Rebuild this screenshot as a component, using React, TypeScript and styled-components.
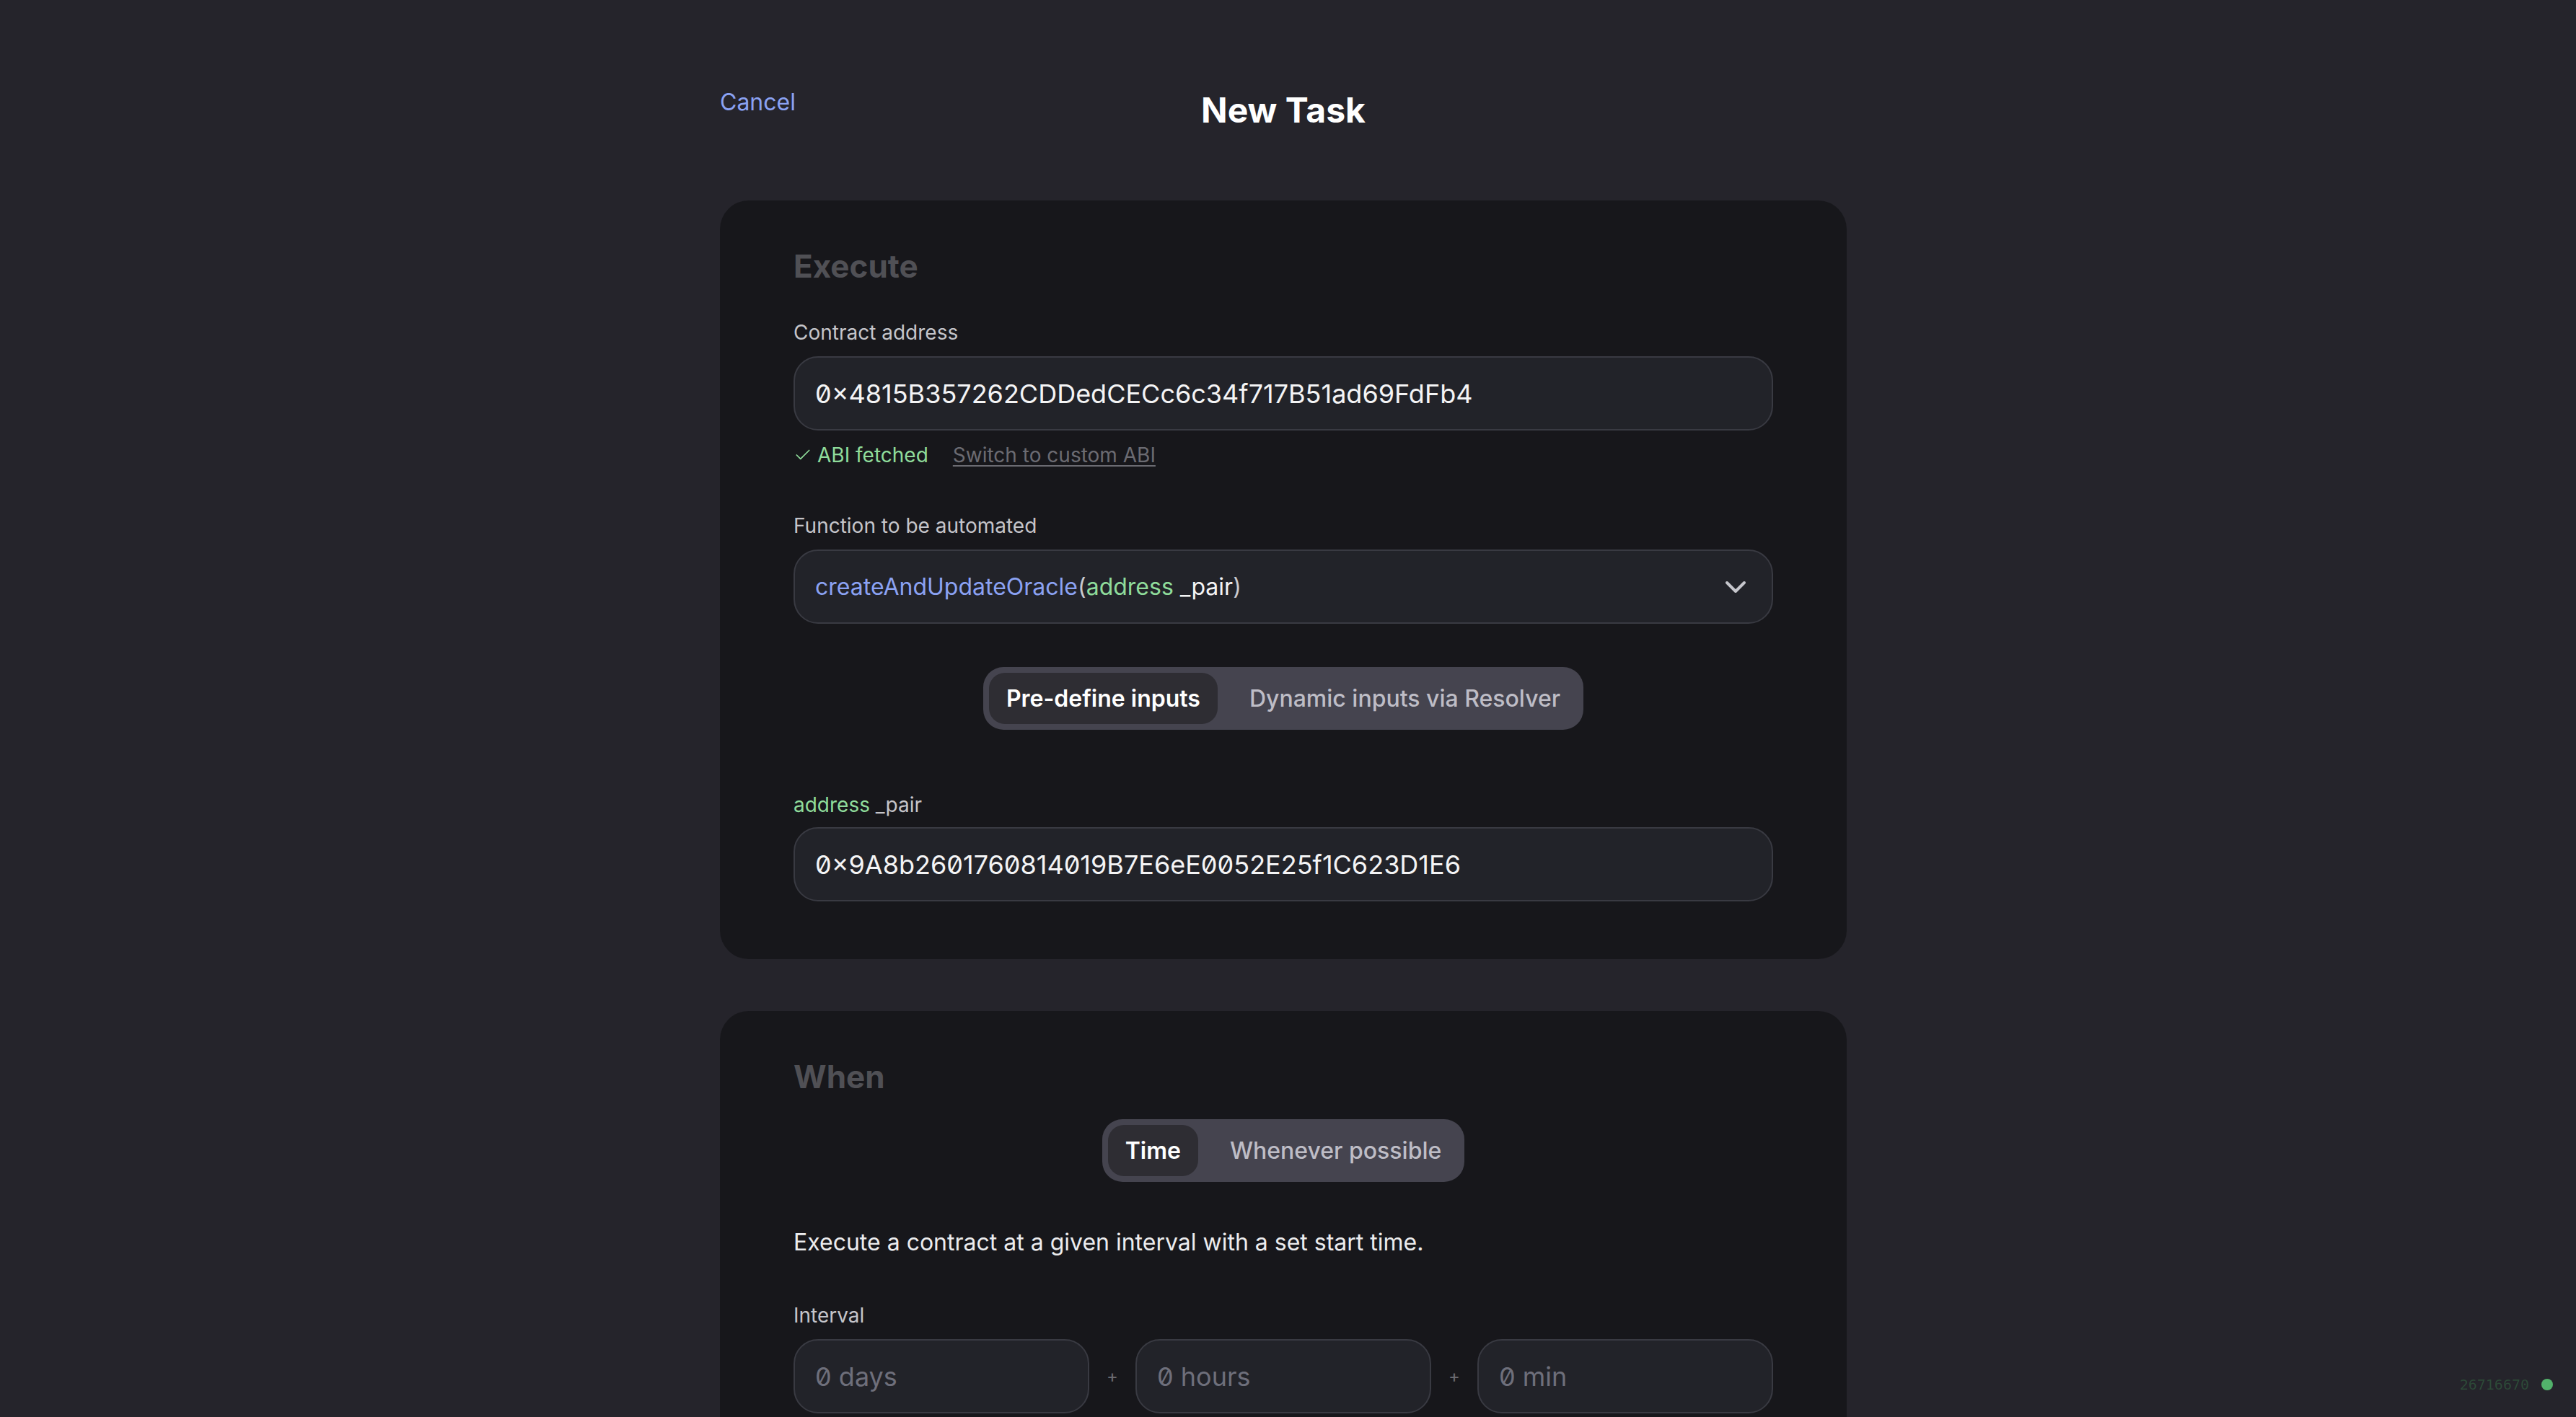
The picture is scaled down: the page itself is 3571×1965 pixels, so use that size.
import React from 'react';
import styled, { createGlobalStyle } from 'styled-components';
import { Check, ChevronDown } from 'lucide-react';

const C = {
  page: '#25242b',
  card: '#17171b',
  field: '#222329',
  fieldBorder: '#393a42',
  heading: '#505055',
  label: '#c5c5ca',
  text: '#f4f4f5',
  blue: '#8ba2f3',
  green: '#8fdc9b',
  muted: '#6b6b72',
  placeholder: '#6e6f7b',
  track: '#45444f',
  tabActive: '#2e2d33',
  tabText: '#bebdc6',
};

const GlobalStyle = createGlobalStyle`
  html, body {
    margin: 0;
    background: ${C.page};
    font-family: Inter, 'Noto Sans', 'Liberation Sans', sans-serif;
    color: ${C.text};
  }
  * { box-sizing: border-box; }
`;

const Page = styled.main`
  padding: 124px 13px 0 0;
`;

const Container = styled.div`
  width: 1562px;
  margin: 0 auto;
`;

const Header = styled.header`
  display: grid;
  grid-template-columns: 1fr auto 1fr;
  align-items: start;
  margin-bottom: 96px;
`;

const CancelLink = styled.a`
  justify-self: start;
  font-size: 32px;
  line-height: 36px;
  color: ${C.blue};
  cursor: pointer;
`;

const Title = styled.h1`
  margin: 0;
  font-size: 48px;
  line-height: 58px;
  font-weight: 700;
  color: #fff;
`;

const Card = styled.section<{ $mt?: number }>`
  background: ${C.card};
  border-radius: 40px;
  padding: 65px 102px 80px;
  margin-top: ${p => p.$mt ?? 0}px;
  display: flex;
  flex-direction: column;
`;

const SectionTitle = styled.h2`
  margin: 0;
  font-size: 44px;
  line-height: 52px;
  font-weight: 700;
  color: ${C.heading};
`;

const Field = styled.div<{ $mt: number; $gap?: number }>`
  display: flex;
  flex-direction: column;
  gap: ${p => p.$gap ?? 17}px;
  margin-top: ${p => p.$mt}px;
`;

const Label = styled.label`
  font-size: 28px;
  line-height: 32px;
  color: ${C.label};
`;

const TypeWord = styled.span`
  color: ${C.green};
`;

const TextInput = styled.input`
  width: 100%;
  height: 103px;
  padding: 0 28px;
  background: ${C.field};
  border: 2px solid ${C.fieldBorder};
  border-radius: 34px;
  font-family: inherit;
  font-size: 36px;
  font-feature-settings: 'zero' 1;
  color: ${C.text};
  outline: none;

  &::placeholder {
    color: ${C.placeholder};
  }
`;

const StatusRow = styled.div<{ $mt: number }>`
  display: flex;
  align-items: center;
  margin-top: ${p => p.$mt}px;
  font-size: 28px;
  line-height: 32px;
`;

const Fetched = styled.span`
  display: inline-flex;
  align-items: center;
  gap: 7px;
  color: ${C.green};
`;

const SwitchLink = styled.a`
  margin-left: 34px;
  color: ${C.muted};
  text-decoration: underline;
  text-underline-offset: 4px;
  cursor: pointer;
`;

const SelectBox = styled.div`
  height: 103px;
  padding: 0 28px;
  display: flex;
  align-items: center;
  justify-content: space-between;
  background: ${C.field};
  border: 2px solid ${C.fieldBorder};
  border-radius: 34px;
  font-size: 32px;
  color: ${C.text};
  cursor: pointer;

  svg {
    color: #c6c6cc;
    margin-right: -2px;
  }
`;

const FnName = styled.span`
  color: ${C.blue};
`;

const Paren = styled.span`
  color: #c9c9ce;
`;

const ToggleRow = styled.div<{ $mt: number }>`
  display: flex;
  justify-content: center;
  margin-top: ${p => p.$mt}px;
`;

const Track = styled.div`
  display: inline-flex;
  gap: 20px;
  padding: 8px;
  border-radius: 28px;
  background: ${C.track};
`;

const Tab = styled.button<{ $active?: boolean }>`
  height: 71px;
  padding: 0 24px;
  border: 0;
  border-radius: 22px;
  background: ${p => (p.$active ? C.tabActive : 'transparent')};
  color: ${p => (p.$active ? '#fff' : C.tabText)};
  font-family: inherit;
  font-size: 32px;
  font-weight: ${p => (p.$active ? 600 : 500)};
  cursor: pointer;
`;

const Description = styled.p<{ $mt: number }>`
  margin: ${p => p.$mt}px 0 0;
  font-size: 32px;
  line-height: 38px;
  color: #ececee;
`;

const IntervalRow = styled.div`
  display: grid;
  grid-template-columns: 1fr auto 1fr auto 1fr;
  align-items: center;
  column-gap: 24px;
`;

const Plus = styled.span`
  font-size: 24px;
  color: ${C.muted};
`;

const BlockBadge = styled.div`
  position: fixed;
  right: 32px;
  bottom: 37px;
  display: flex;
  align-items: center;
  gap: 17px;
  font-family: 'DejaVu Sans Mono', 'Liberation Mono', monospace;
  font-size: 20px;
  line-height: 16px;
  color: #2d4a38;
`;

const Dot = styled.span`
  width: 16px;
  height: 16px;
  border-radius: 50%;
  background: #52b26b;
`;

export default function App() {
  return (
    <>
      <GlobalStyle />
      <Page>
        <Container>
          <Header>
            <CancelLink>Cancel</CancelLink>
            <Title>New Task</Title>
          </Header>

          <Card>
            <SectionTitle>Execute</SectionTitle>

            <Field $mt={50}>
              <Label>Contract address</Label>
              <TextInput readOnly value="0×4815B357262CDDedCECc6c34f717B51ad69FdFb4" />
            </Field>
            <StatusRow $mt={18}>
              <Fetched>
                <Check size={26} strokeWidth={1.6} />
                ABI fetched
              </Fetched>
              <SwitchLink>Switch to custom ABI</SwitchLink>
            </StatusRow>

            <Field $mt={66}>
              <Label>Function to be automated</Label>
              <SelectBox>
                <span>
                  <FnName>createAndUpdateOracle</FnName>
                  <Paren>(</Paren>
                  <TypeWord>address</TypeWord> _pair
                  <Paren>)</Paren>
                </span>
                <ChevronDown size={48} strokeWidth={2} />
              </SelectBox>
            </Field>

            <ToggleRow $mt={60}>
              <Track>
                <Tab $active>Pre-define inputs</Tab>
                <Tab>Dynamic inputs via Resolver</Tab>
              </Track>
            </ToggleRow>

            <Field $mt={88} $gap={15}>
              <Label>
                <TypeWord>address</TypeWord> _pair
              </Label>
              <TextInput readOnly value="0×9A8b2601760814019B7E6eE0052E25f1C623D1E6" />
            </Field>
          </Card>

          <Card $mt={72}>
            <SectionTitle>When</SectionTitle>

            <ToggleRow $mt={33}>
              <Track>
                <Tab $active>Time</Tab>
                <Tab>Whenever possible</Tab>
              </Track>
            </ToggleRow>

            <Description $mt={65}>
              Execute a contract at a given interval with a set start time.
            </Description>

            <Field $mt={66}>
              <Label>Interval</Label>
              <IntervalRow>
                <TextInput placeholder="0 days" />
                <Plus>+</Plus>
                <TextInput placeholder="0 hours" />
                <Plus>+</Plus>
                <TextInput placeholder="0 min" />
              </IntervalRow>
            </Field>
          </Card>
        </Container>
      </Page>

      <BlockBadge>
        26716670
        <Dot />
      </BlockBadge>
    </>
  );
}
